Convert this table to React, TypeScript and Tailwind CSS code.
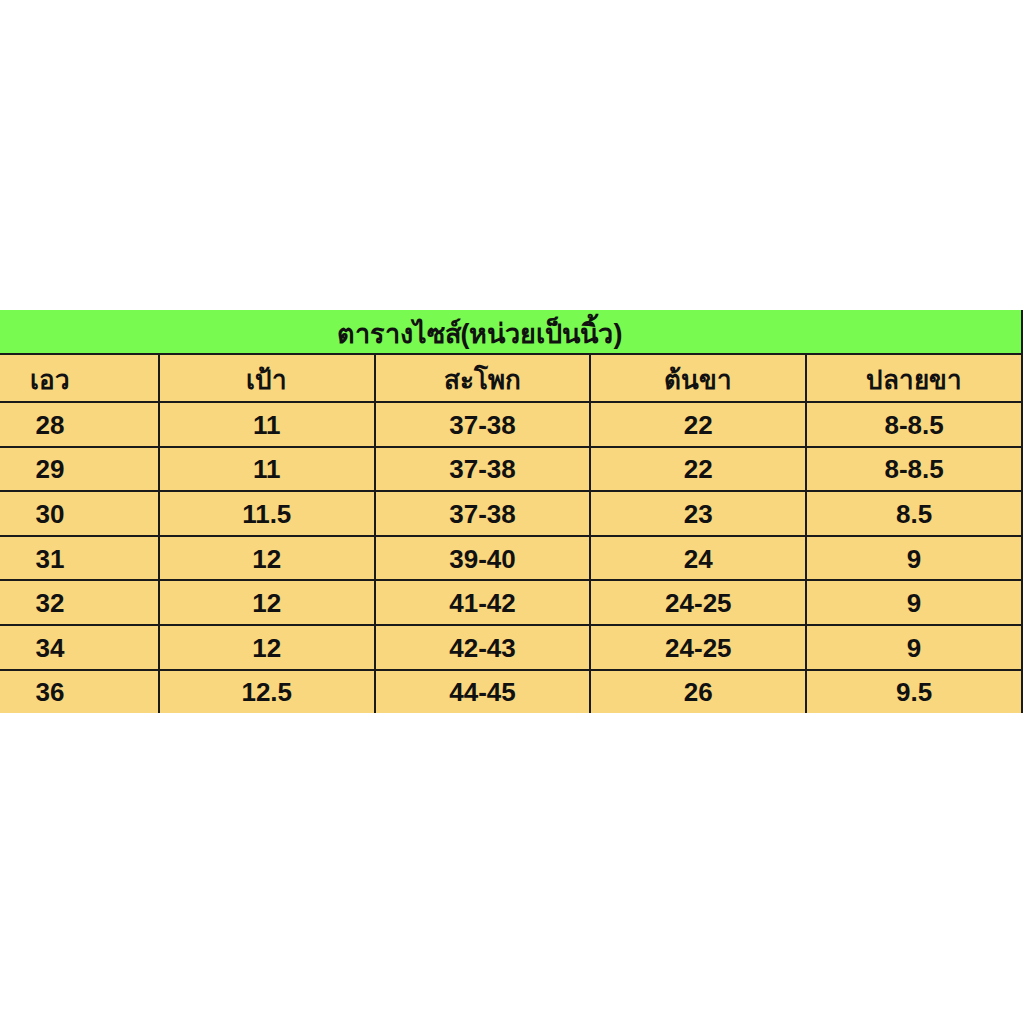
const HEAD = ["เอว", "เป้า", "สะโพก", "ต้นขา", "ปลายขา"];

const ROWS = [
  ["28", "11", "37-38", "22", "8-8.5"],
  ["29", "11", "37-38", "22", "8-8.5"],
  ["30", "11.5", "37-38", "23", "8.5"],
  ["31", "12", "39-40", "24", "9"],
  ["32", "12", "41-42", "24-25", "9"],
  ["34", "12", "42-43", "24-25", "9"],
  ["36", "12.5", "44-45", "26", "9.5"],
];

function Row({ cells, head }: { cells: string[]; head?: boolean }) {
  const pad = head ? "pt-[5px]" : "pt-[2px]";
  return (
    <div
      className={
        head
          ? "flex h-[48px] border-t-2 border-[#1a1a1a]"
          : "flex h-[44.6px] border-t-2 border-[#1a1a1a]"
      }
    >
      <div className={`w-[158px] flex items-center ${pad}`}>
        <div className="w-[100px] text-center">{cells[0]}</div>
      </div>
      {cells.slice(1).map((c, i) => (
        <div
          key={i}
          className={`w-[216px] flex items-center justify-center border-l-2 border-[#1a1a1a] ${pad}`}
        >
          {c}
        </div>
      ))}
    </div>
  );
}

export default function App() {
  return (
    <div className="w-[1024px] h-[1024px] bg-white pt-[310px] font-['Liberation_Sans',Arial,sans-serif] font-bold text-[26px] text-[#111]">
      <div className="w-[1023px] border-r-2 border-[#1a1a1a] bg-[#f9d77e]">
        <div className="h-[43px] bg-[#78fa50] flex items-center justify-center pr-[62px] pt-[6px] text-[27px]">
          ตารางไซส์(หน่วยเป็นนิ้ว)
        </div>
        <Row cells={HEAD} head />
        {ROWS.map((r, i) => (
          <Row key={i} cells={r} />
        ))}
      </div>
    </div>
  );
}
